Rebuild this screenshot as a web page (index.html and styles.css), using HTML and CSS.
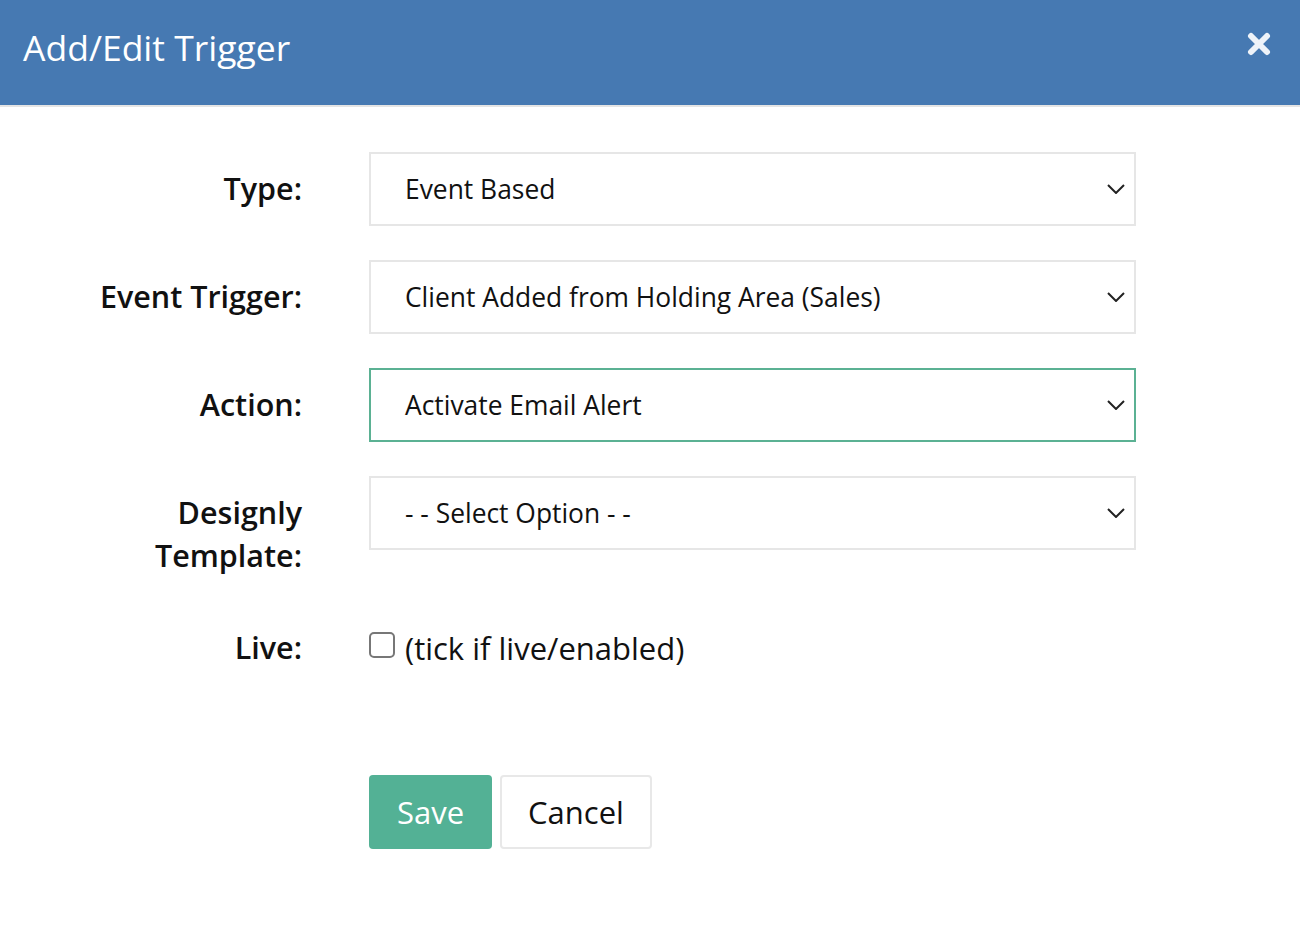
FILE: index.html
```html
<!DOCTYPE html>
<html>
<head>
<meta charset="utf-8">
<link rel="stylesheet" href="styles.css">
</head>
<body>
<div class="header">
  <h1 class="title">Add/Edit Trigger</h1>
  <span class="close">
    <svg width="24" height="24" viewBox="0 0 24 24"><path d="M4 4 L20 20 M20 4 L4 20" stroke="#eef3f9" stroke-width="6" stroke-linecap="round"/></svg>
  </span>
</div>
<div class="form">
  <div class="row">
    <div class="label">Type:</div>
    <div class="select"><span>Event Based</span><svg class="chev" width="18" height="10" viewBox="0 0 18 10"><path d="M1 1 L9 9 L17 1" fill="none" stroke="#222" stroke-width="2"/></svg></div>
  </div>
  <div class="row">
    <div class="label">Event Trigger:</div>
    <div class="select"><span>Client Added from Holding Area (Sales)</span><svg class="chev" width="18" height="10" viewBox="0 0 18 10"><path d="M1 1 L9 9 L17 1" fill="none" stroke="#222" stroke-width="2"/></svg></div>
  </div>
  <div class="row">
    <div class="label">Action:</div>
    <div class="select focus"><span>Activate Email Alert</span><svg class="chev" width="18" height="10" viewBox="0 0 18 10"><path d="M1 1 L9 9 L17 1" fill="none" stroke="#222" stroke-width="2"/></svg></div>
  </div>
  <div class="row">
    <div class="label">Designly<br>Template:</div>
    <div class="select"><span>- - Select Option - -</span><svg class="chev" width="18" height="10" viewBox="0 0 18 10"><path d="M1 1 L9 9 L17 1" fill="none" stroke="#222" stroke-width="2"/></svg></div>
  </div>
  <div class="row live">
    <div class="label">Live:</div>
    <div class="check"><span class="box"></span><span class="checktext">(tick if live/enabled)</span></div>
  </div>
  <div class="row buttons">
    <div class="spacer"></div>
    <div class="btns"><button class="btn save">Save</button><button class="btn cancel">Cancel</button></div>
  </div>
</div>
</body>
</html>
```
FILE: styles.css
```css
html, body { margin: 0; padding: 0; background: #fff; }
body { font-family: "Open Sans", "Noto Sans", sans-serif; color: #111; }
.header {
  height: 105px;
  background: #4679b2;
  border-bottom: 2px solid #e4e4e4;
  display: flex;
  align-items: center;
  justify-content: space-between;
  padding: 0 29px 0 23px;
}
.title { margin: 0; font-weight: 400; font-size: 35.5px; color: #fff; position: relative; top: -6px; }
.close { display: flex; position: relative; top: -9px; }
.form { padding-top: 45px; }
.row { display: flex; margin-bottom: 34px; }
.label {
  width: 302px;
  text-align: right;
  font-size: 30.5px;
  font-weight: 600;
  line-height: 43px;
  padding-top: 15px;
  margin-right: 67px;
  box-sizing: border-box;
}
.select {
  width: 767px;
  height: 74px;
  box-sizing: border-box;
  border: 2px solid #e6e6e6;
  display: flex;
  align-items: center;
  justify-content: space-between;
  padding: 0 9px 0 34px;
  font-size: 26.4px;
  color: #111;
}
.select.focus { border-color: #5bb193; }
.live { padding-top: 15px; }
.live .label { padding-top: 0; }
.check { display: flex; align-items: center; height: 43px; }
.box {
  width: 22px; height: 22px;
  border: 2px solid #777;
  border-radius: 5px;
  margin-right: 10px;
  position: relative; top: -3px;
}
.checktext { font-size: 31px; }
.buttons { margin-top: 106px; }
.spacer { width: 369px; }
.btns { display: flex; gap: 8px; }
.btn {
  font-family: "Open Sans", "Noto Sans", sans-serif;
  font-size: 31px;
  height: 74px;
  border-radius: 4px;
  padding: 0;
  cursor: pointer;
}
.save { background: #53b195; color: #fff; border: none; width: 123px; }
.cancel { background: #fff; color: #111; border: 2px solid #e8e8e8; width: 152px; }
```
